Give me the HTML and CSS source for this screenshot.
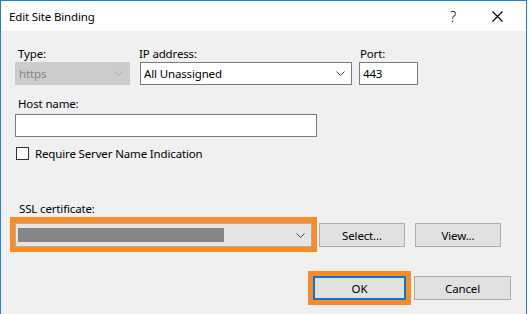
FILE: index.html
```html
<!DOCTYPE html>
<html lang="en">
<head>
    <meta charset="UTF-8">
    <title>Edit Site Binding</title>
    <link rel="stylesheet" href="styles.css">
</head>
<body>
    <div class="dialog">
        <div class="titlebar">
            <span class="title">Edit Site Binding</span>
            <span class="help">?</span>
            <svg class="close" width="11" height="11" viewBox="0 0 11 11">
                <path d="M0.5 0.5 L10.5 10.5 M10.5 0.5 L0.5 10.5" stroke="#000" stroke-width="1.1" fill="none"/>
            </svg>
        </div>
        <div class="content">
            <div class="row-top">
                <div class="field field-type">
                    <label class="lbl">Type:</label>
                    <div class="select disabled">
                        <span>https</span>
                        <svg class="chev" width="9" height="5" viewBox="0 0 9 5"><path d="M0.5 0.5 L4.5 4.5 L8.5 0.5" stroke="#a8a8a8" fill="none"/></svg>
                    </div>
                </div>
                <div class="field field-ip">
                    <label class="lbl">IP address:</label>
                    <div class="select">
                        <span>All Unassigned</span>
                        <svg class="chev" width="9" height="5" viewBox="0 0 9 5"><path d="M0.5 0.5 L4.5 4.5 L8.5 0.5" stroke="#444" fill="none"/></svg>
                    </div>
                </div>
                <div class="field field-port">
                    <label class="lbl">Port:</label>
                    <div class="textbox">443</div>
                </div>
            </div>

            <label class="lbl lbl-host">Host name:</label>
            <div class="textbox host"></div>

            <div class="check-row">
                <span class="checkbox"></span>
                <span>Require Server Name Indication</span>
            </div>

            <label class="lbl lbl-ssl">SSL certificate:</label>
            <div class="ssl-row">
                <div class="highlight">
                    <div class="select cert">
                        <span class="blur"></span>
                        <svg class="chev" width="9" height="5" viewBox="0 0 9 5"><path d="M0.5 0.5 L4.5 4.5 L8.5 0.5" stroke="#444" fill="none"/></svg>
                    </div>
                </div>
                <button class="btn btn-select">Select...</button>
                <button class="btn btn-view">View...</button>
            </div>

            <div class="footer">
                <div class="highlight ok-wrap">
                    <button class="btn btn-ok">OK</button>
                </div>
                <button class="btn btn-cancel">Cancel</button>
            </div>
        </div>
    </div>
</body>
</html>
```

FILE: styles.css
```css
html, body {
    margin: 0;
    padding: 0;
}
body {
    background: #fff;
    font-family: "Noto Sans", "Open Sans", sans-serif;
    font-size: 11.5px;
    letter-spacing: -0.15px;
    color: #000;
    width: 529px;
    height: 314px;
    overflow: hidden;
}
.dialog {
    width: 525px;
    height: 313px;
    border: 1px solid #1883d7;
    border-bottom: none;
    background: #f0f0f0;
}
.titlebar {
    height: 30px;
    background: #fff;
    display: flex;
    align-items: center;
    padding-left: 8px;
}
.title {
    flex: 1;
}
.help {
    font-size: 14px;
    font-weight: 300;
    margin-right: 36px;
}
.close {
    margin-right: 23px;
}
.content {
    padding: 15px 15px 0 14px;
}
.lbl {
    display: block;
    line-height: 15px;
    height: 15px;
    margin-bottom: 1px;
}
.row-top {
    display: flex;
}
.field-type {
    width: 115px;
}
.field-type .lbl {
    padding-left: 3px;
}
.field-ip {
    width: 212px;
    margin-left: 10px;
}
.field-ip .lbl {
    margin-left: -1px;
}
.field-port {
    width: 59px;
    margin-left: 7px;
}
.field-port .lbl {
    padding-left: 1px;
}
.select, .textbox {
    box-sizing: border-box;
    height: 23px;
    border: 1px solid #7a7a7a;
    background: #fff;
    display: flex;
    align-items: center;
    padding-left: 3px;
}
.select span {
    flex: 1;
}
.select .chev {
    margin-right: 6px;
}
.select.disabled {
    background: #cccccc;
    border-color: #cccccc;
    color: #838383;
}
.lbl-host {
    margin-top: 11px;
    padding-left: 3px;
    margin-bottom: 3px;
}
.textbox.host {
    width: 302px;
}
.check-row {
    display: flex;
    align-items: center;
    margin-top: 9px;
    height: 14px;
}
.checkbox {
    box-sizing: border-box;
    width: 13px;
    height: 13px;
    border: 1px solid #333;
    background: #fff;
    margin-left: 1px;
    margin-right: 6px;
}
.lbl-ssl {
    margin-top: 41px;
    padding-left: 4px;
}
.ssl-row {
    display: flex;
    align-items: center;
    margin-left: -5px;
}
.highlight {
    border: 5px solid #fb8b24;
    border-top-width: 6px;
    background: #fb8b24;
}
.select.cert {
    width: 297px;
    height: 24px;
    background: #e5e5e5;
    border-color: #adadad;
    padding-left: 2px;
}
.select.cert .blur {
    flex: none;
    width: 206px;
    height: 14px;
    background: #868686;
}
.select.cert .chev {
    margin-left: auto;
}
.btn {
    box-sizing: border-box;
    font-family: inherit;
    font-size: 11.5px;
    letter-spacing: -0.15px;
    background: #e1e1e1;
    border: 1px solid #adadad;
    height: 24px;
    padding: 0;
    color: #000;
}
.btn-select {
    width: 86px;
    margin-left: 2px;
    margin-top: 1px;
}
.btn-view {
    width: 86px;
    margin-left: 10px;
    margin-top: 1px;
}
.footer {
    display: flex;
    justify-content: flex-end;
    align-items: center;
    margin-top: 19px;
}
.ok-wrap {
    border-width: 5px 5px 5px 5px;
}
.btn-ok {
    display: block;
    width: 93px;
    border: 2px solid #0078d7;
    margin: 0;
}
.btn-cancel {
    width: 97px;
    margin-left: 3px;
}
```
